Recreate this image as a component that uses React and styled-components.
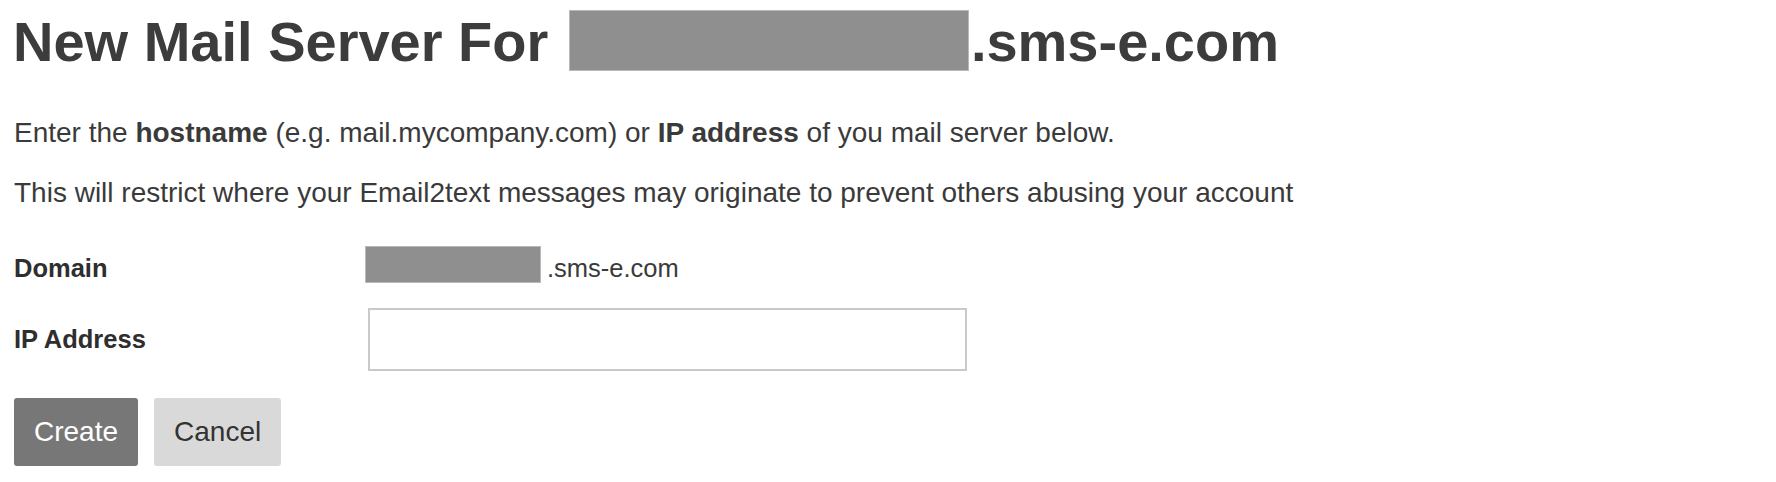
import styled, { createGlobalStyle } from 'styled-components';

const GlobalStyle = createGlobalStyle`
  body {
    margin: 0;
    background: #ffffff;
    font-family: "Liberation Sans", Arial, Helvetica, sans-serif;
    color: #3a3a3a;
  }
`;

const Page = styled.div`
  padding: 0 14px;
`;

const Title = styled.h1`
  margin: 0 0 43px -1px;
  padding-top: 9px;
  font-size: 56px;
  font-weight: 700;
  line-height: normal;
  color: #3c3c3c;
  white-space: nowrap;
`;

const Redacted = styled.span`
  display: inline-block;
  box-sizing: border-box;
  width: ${({ w }) => w}px;
  height: ${({ h }) => h}px;
  margin-left: ${({ shift }) => shift || 0}px;
  margin-right: ${({ shift }) => (shift ? 2 : 0)}px;
  background: #8f8f8f;
  border: 1px solid #b9b9b9;
  vertical-align: ${({ drop }) => (drop ? `-${drop}px` : 'baseline')};
`;

const Para = styled.p`
  margin: 0 0 28px;
  font-size: 28px;
  line-height: normal;
  color: #3a3a3a;
`;

const Form = styled.form`
  margin-top: 37px;
  display: flex;
  flex-direction: column;
`;

const Row = styled.div`
  display: flex;
  align-items: ${({ align }) => align || 'center'};
  margin-bottom: ${({ gap }) => gap}px;
  font-size: 25.5px;
`;

const Label = styled.label`
  width: 351px;
  flex: none;
  font-weight: 700;
  color: #2e2e2e;
  line-height: normal;
`;

const DomainValue = styled.div`
  display: flex;
  align-items: flex-end;
  gap: 6px;
  color: #3a3a3a;
  line-height: normal;
`;

const Input = styled.input`
  box-sizing: border-box;
  width: 599px;
  height: 63px;
  margin-left: 3px;
  border: 2px solid #c9c9c9;
  border-radius: 0;
  background: #fff;
  font: inherit;
  padding: 0 10px;
  outline: none;
`;

const Actions = styled.div`
  display: flex;
  gap: 16px;
`;

const Button = styled.button`
  height: 68px;
  padding: 0 20px;
  border: none;
  border-radius: 3px;
  font-family: "Liberation Sans", Arial, sans-serif;
  font-size: 28px;
  cursor: pointer;
  background: ${({ primary }) => (primary ? '#777777' : '#d9d9d9')};
  color: ${({ primary }) => (primary ? '#ffffff' : '#333333')};
`;

export default function App() {
  return (
    <Page>
      <GlobalStyle />
      <Title>
        New Mail Server For <Redacted w={400} h={61} drop={10} shift={5} />.sms-e.com
      </Title>
      <Para>
        Enter the <b>hostname</b> (e.g. mail.mycompany.com) or <b>IP address</b> of you mail server below.
      </Para>
      <Para>
        This will restrict where your Email2text messages may originate to prevent others abusing your account
      </Para>
      <Form onSubmit={(e) => e.preventDefault()}>
        <Row align="flex-end" gap={25}>
          <Label>Domain</Label>
          <DomainValue>
            <Redacted w={176} h={37} />
            <span>.sms-e.com</span>
          </DomainValue>
        </Row>
        <Row gap={27}>
          <Label>IP Address</Label>
          <Input type="text" />
        </Row>
        <Actions>
          <Button type="submit" primary>Create</Button>
          <Button type="button">Cancel</Button>
        </Actions>
      </Form>
    </Page>
  );
}
